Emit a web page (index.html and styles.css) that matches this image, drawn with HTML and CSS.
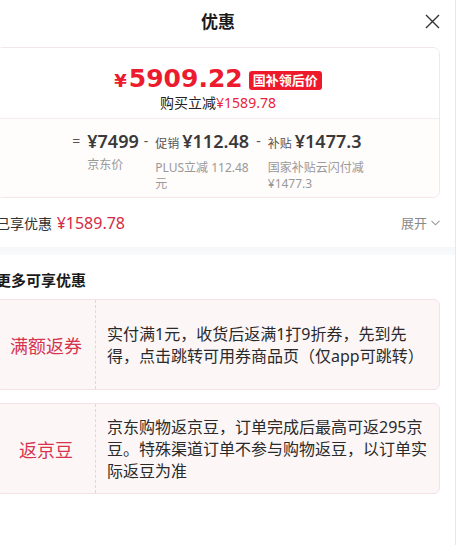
FILE: index.html
```html
<!DOCTYPE html>
<html lang="zh-CN">
<head>
<meta charset="utf-8">
<title>优惠</title>
<link rel="stylesheet" href="styles.css">
</head>
<body>
<div class="sheet">
  <header class="head">
    <h1 class="title">优惠</h1>
    <button class="close" aria-label="关闭">
      <svg width="15" height="15" viewBox="0 0 15 15"><path d="M1 1L14 14M14 1L1 14" stroke="#333" stroke-width="1.4" fill="none"/></svg>
    </button>
  </header>

  <section class="card">
    <div class="card-top">
      <div class="price-row">
        <span class="price"><span class="yen">¥</span>5909.22</span>
        <span class="badge">国补领后价</span>
      </div>
      <div class="save">购买立减<span class="red">¥1589.78</span></div>
    </div>
    <div class="card-bottom">
      <div class="calc">
        <div class="item">
          <span class="op">=</span>
          <div class="col">
            <div class="val">¥7499</div>
            <div class="lbl">京东价</div>
          </div>
        </div>
        <div class="item">
          <span class="op">-</span>
          <div class="col fixed">
            <div class="val"><span class="tag">促销</span>¥112.48</div>
            <div class="lbl">PLUS立减 112.48元</div>
          </div>
        </div>
        <div class="item">
          <span class="op">-</span>
          <div class="col fixed">
            <div class="val"><span class="tag">补贴</span>¥1477.3</div>
            <div class="lbl">国家补贴云闪付减¥1477.3</div>
          </div>
        </div>
      </div>
    </div>
  </section>

  <div class="enjoy">
    <div class="enjoy-l">已享优惠 <span class="enjoy-amt">¥1589.78</span></div>
    <div class="expand">展开
      <svg width="9" height="6" viewBox="0 0 9 6"><path d="M0.5 0.8L4.5 4.8L8.5 0.8" stroke="#999" stroke-width="1.1" fill="none"/></svg>
    </div>
  </div>

  <div class="band"></div>

  <section class="more">
    <h2 class="more-title">更多可享优惠</h2>
    <div class="coupon">
      <div class="c-name">满额返券</div>
      <div class="c-desc">实付满1元，收货后返满1打9折券，先到先得，点击跳转可用券商品页（仅app可跳转）</div>
    </div>
    <div class="coupon">
      <div class="c-name">返京豆</div>
      <div class="c-desc">京东购物返京豆，订单完成后最高可返295京豆。特殊渠道订单不参与购物返豆，以订单实际返豆为准</div>
    </div>
  </section>
</div>
</body>
</html>
```

FILE: styles.css
```css
* { box-sizing: border-box; }
html, body { margin: 0; padding: 0; background: #fff; }
body {
  font-family: "Noto Sans", "Noto Sans CJK SC", sans-serif;
  color: #333;
  overflow: hidden;
}
.sheet {
  width: 475px;
  margin-left: -19px;
  min-height: 545px;
  border-right: 1px solid #e8e8e8;
  background: #fff;
}
.head {
  height: 47px;
  position: relative;
  display: flex;
  align-items: center;
  justify-content: center;
}
.title {
  margin: 0;
  font-size: 17px;
  font-weight: 700;
  color: #1a1a1a;
  line-height: 24px;
  margin-top: -4px;
}
.close {
  position: absolute;
  right: 15px;
  top: 14px;
  width: 15px;
  height: 15px;
  padding: 0;
  border: 0;
  background: none;
  display: block;
}
.close svg { display: block; }

.card {
  margin: 0 15px;
  border: 1px solid #f4e6e8;
  border-radius: 7px;
  overflow: hidden;
}
.card-top {
  background: #fff;
  padding: 13px 0 5px;
  border-bottom: 1px solid #f3ecee;
  box-shadow: 0 1px 2px rgba(0,0,0,0.03);
}
.price-row {
  display: flex;
  justify-content: center;
  align-items: center;
  height: 32px;
  padding-top: 3px;
}
.price {
  font-family: "DejaVu Sans", sans-serif;
  font-weight: 700;
  font-size: 25px;
  color: #ec1b2e;
  letter-spacing: 0;
}
.yen { font-size: 18px; margin-right: 2px; }
.badge {
  margin-left: 6px;
  background: #ee1a2c;
  color: #fff;
  font-size: 13px;
  font-weight: 700;
  line-height: 19px;
  height: 19px;
  padding: 0 4px;
  border-radius: 3px;
  margin-top: 3px;
}
.save {
  text-align: center;
  font-size: 14px;
  line-height: 20px;
  color: #222;
}
.red { color: #e8233a; }

.card-bottom {
  background: #fffcfc;
  padding: 10px 0 5px;
}
.calc {
  display: flex;
  justify-content: center;
  gap: 5px;
}
.item { display: flex; align-items: flex-start; }
.op {
  font-size: 14px;
  line-height: 24px;
  color: #555;
  margin-right: 7px;
}
.col.fixed { width: 96px; }
.val {
  font-size: 18px;
  font-weight: 600;
  line-height: 24px;
  color: #3a3a3a;
  white-space: nowrap;
}
.tag {
  font-size: 12px;
  font-weight: 400;
  color: #555;
  margin-right: 3px;
}
.lbl {
  margin-top: 4px;
  font-size: 12px;
  line-height: 16px;
  color: #999;
  word-break: break-all;
}

.enjoy {
  height: 49px;
  padding: 0 15px;
  display: flex;
  align-items: center;
  justify-content: space-between;
}
.enjoy-l { font-size: 14px; color: #333; }
.enjoy-amt { font-size: 16px; color: #d42a45; margin-left: 1px; }
.expand {
  font-size: 13px;
  color: #888;
  display: flex;
  align-items: center;
  gap: 4px;
}
.expand svg { display: block; }

.band {
  height: 8px;
  background: linear-gradient(#f6f7f9, #fafbfc);
}

.more { padding: 14px 15px 0; }
.more-title {
  margin: 0 0 8px;
  font-size: 15px;
  font-weight: 700;
  line-height: 22px;
  color: #1a1a1a;
}
.coupon {
  display: flex;
  min-height: 91px;
  background: #fdf6f7;
  border: 1px solid #f4e2e5;
  border-radius: 6px;
  margin-bottom: 13px;
}
.c-name {
  width: 99px;
  flex: none;
  display: flex;
  align-items: center;
  justify-content: center;
  font-size: 18px;
  color: #d6344d;
  border-right: 1px dashed #ead3d7;
}
.c-desc {
  flex: 1;
  display: flex;
  align-items: center;
  padding: 10px 12px 10px 11px;
  font-size: 16px;
  line-height: 22px;
  color: #2a2a2a;
}
```
